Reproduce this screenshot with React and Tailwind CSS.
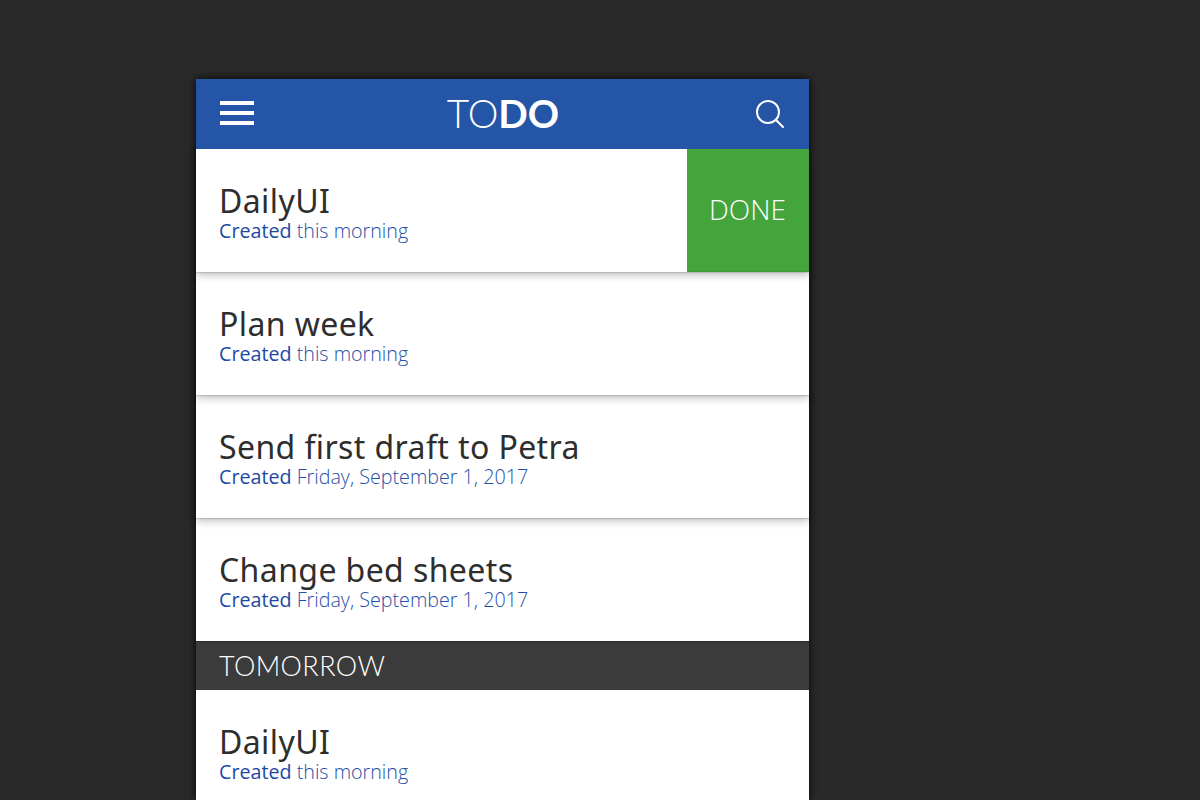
const titleFont = "font-['Noto_Sans',sans-serif]";
const brandFont = "font-['Lato',sans-serif]";

function Task({ title, when, done, stack = '' }) {
  return (
    <div className={`relative flex h-[123px] shrink-0 bg-white ${stack}`}>
      <div className="flex-1 pl-[23px] pt-[32px]">
        <div className={`${titleFont} text-[32px] leading-[40px] tracking-[0.4px] text-[#2e2e2e]`}>{title}</div>
        <div className="font-['Open_Sans',sans-serif] text-[19.7px] leading-[20px] font-light text-[#1f4fa8]">
          <span className="font-normal text-[#1c49a3]">Created</span> {when}
        </div>
      </div>
      {done && (
        <div className="flex w-[122px] items-center justify-center border-b border-[#3f9c37] bg-[#43a53b] pr-[1px] pb-[3px] font-['Open_Sans',sans-serif] text-[28px] font-light text-white">
          DONE
        </div>
      )}
    </div>
  );
}

const shadow = 'shadow-[0_1px_1px_rgba(0,0,0,0.12),0_3px_8px_rgba(0,0,0,0.25)]';

export default function App() {
  return (
    <div className="flex h-[800px] w-[1200px] overflow-hidden bg-[#292929] pl-[196px] pt-[79px]">
      <div className="flex w-[613px] shrink-0 flex-col shadow-[0_0_8px_rgba(0,0,0,0.9)]">
        <header className="z-50 flex h-[70px] shrink-0 items-center justify-between bg-[#2455a6] pl-[24px] pr-[24px] text-white">
          <div className="mb-[2px] flex w-[34px] flex-col gap-[6px]">
            <span className="h-[4px] bg-white" />
            <span className="h-[4px] bg-white" />
            <span className="h-[4px] bg-white" />
          </div>
          <div className={`${brandFont} mb-[2px] mr-[3px] text-[38.8px] leading-none font-light`}>
            TO<span className="font-bold">DO</span>
          </div>
          <svg width="30" height="30" viewBox="0 0 30 30" fill="none" stroke="white" strokeWidth="2" strokeLinecap="round">
            <circle cx="13" cy="13" r="11" />
            <path d="M20.8 20.8 L28 28" />
          </svg>
        </header>
        <Task title="DailyUI" when="this morning" done stack={`z-40 ${shadow}`} />
        <Task title="Plan week" when="this morning" stack={`z-30 ${shadow}`} />
        <Task title="Send first draft to Petra" when="Friday, September 1, 2017" stack={`z-20 ${shadow}`} />
        <Task title="Change bed sheets" when="Friday, September 1, 2017" />
        <div className={`${brandFont} z-10 flex h-[49px] shrink-0 items-center border-t border-[#2b2b2b] bg-[#3b3b3b] pl-[23px] text-[27px] font-light tracking-[0.4px] text-white`}>
          TOMORROW
        </div>
        <Task title="DailyUI" when="this morning" />
      </div>
    </div>
  );
}
